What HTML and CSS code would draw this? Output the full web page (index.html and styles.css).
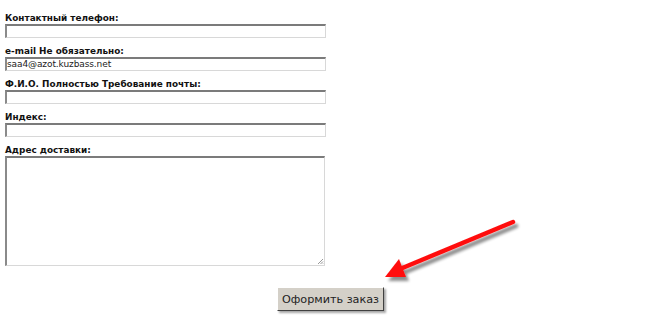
FILE: index.html
```html
<!DOCTYPE html>
<html lang="ru">
<head>
<meta charset="utf-8">
<title>Оформить заказ</title>
<link rel="stylesheet" href="styles.css">
</head>
<body>
<form class="order">
  <div class="field">
    <label class="lbl">Контактный телефон:</label>
    <div class="inp"></div>
  </div>
  <div class="field">
    <label class="lbl">e-mail Не обязательно:</label>
    <div class="inp">saa4@azot.kuzbass.net</div>
  </div>
  <div class="field">
    <label class="lbl">Ф.И.О. Полностью Требование почты:</label>
    <div class="inp"></div>
  </div>
  <div class="field">
    <label class="lbl">Индекс:</label>
    <div class="inp"></div>
  </div>
  <div class="field">
    <label class="lbl">Адрес доставки:</label>
    <div class="area">
      <svg class="grip" width="7" height="7" viewBox="0 0 7 7"><path d="M6 1L1 6M6 3.5L3.5 6M6 5.5L5.5 6" stroke="#999" stroke-width="1"/></svg>
    </div>
  </div>
  <div class="actions">
    <button type="button" class="btn">Оформить заказ</button>
  </div>
</form>
<svg class="arrow" width="160" height="90" viewBox="0 0 160 90">
  <defs>
    <filter id="sh" x="-20%" y="-30%" width="140%" height="160%">
      <feGaussianBlur in="SourceAlpha" stdDeviation="1.6"/>
      <feOffset dx="3" dy="4" result="b"/>
      <feComponentTransfer><feFuncA type="linear" slope="0.45"/></feComponentTransfer>
      <feMerge><feMergeNode/><feMergeNode in="SourceGraphic"/></feMerge>
    </filter>
  </defs>
  <g filter="url(#sh)">
    <line x1="133" y1="15" x2="20" y2="62" stroke="#ff0f0f" stroke-width="4.5" stroke-linecap="round"/>
    <polygon points="5,70 19,52 26,70" fill="#ff0f0f"/>
  </g>
</svg>
</body>
</html>
```

FILE: styles.css
```css
html, body {
  margin: 0;
  padding: 0;
  background: #ffffff;
}
body {
  width: 650px;
  height: 329px;
  position: relative;
  overflow: hidden;
  font-family: "DejaVu Sans", Verdana, sans-serif;
}
.order {
  display: flex;
  flex-direction: column;
  padding: 12px 0 0 5px;
}
.field {
  display: flex;
  flex-direction: column;
  margin-bottom: 7px;
}
.lbl {
  font-weight: bold;
  font-size: 8.9px;
  line-height: 12px;
  height: 12px;
  color: #111;
}
.inp {
  box-sizing: border-box;
  height: 14px;
  width: 321px;
  border-top: 2px solid #7b7b7b;
  border-left: 2px solid #8a8a8a;
  border-right: 1px solid #d8d8d8;
  border-bottom: 1px solid #d8d8d8;
  font-size: 9px;
  letter-spacing: -0.1px;
  line-height: 11px;
  padding-left: 0;
  color: #222;
  background: #fff;
}
.area {
  position: relative;
  box-sizing: border-box;
  height: 110px;
  width: 320px;
  border-top: 2px solid #7b7b7b;
  border-left: 2px solid #8a8a8a;
  border-right: 1px solid #d8d8d8;
  border-bottom: 1px solid #d8d8d8;
  background: #fff;
}
.grip {
  position: absolute;
  right: 0;
  bottom: 0;
}
.actions {
  display: flex;
  padding-left: 272px;
  margin-top: 14px;
}
.btn {
  flex-shrink: 0;
  white-space: nowrap;
  box-sizing: border-box;
  width: 107px;
  height: 24px;
  padding: 0;
  background: #d4d0c8;
  border: 1px solid;
  border-color: #ffffff #404040 #404040 #ffffff;
  box-shadow: 2px 2px 2px rgba(0,0,0,0.35);
  font-family: "DejaVu Sans", Tahoma, sans-serif;
  font-size: 11.2px;
  color: #222;
}
.arrow {
  position: absolute;
  left: 380px;
  top: 207px;
}
```
